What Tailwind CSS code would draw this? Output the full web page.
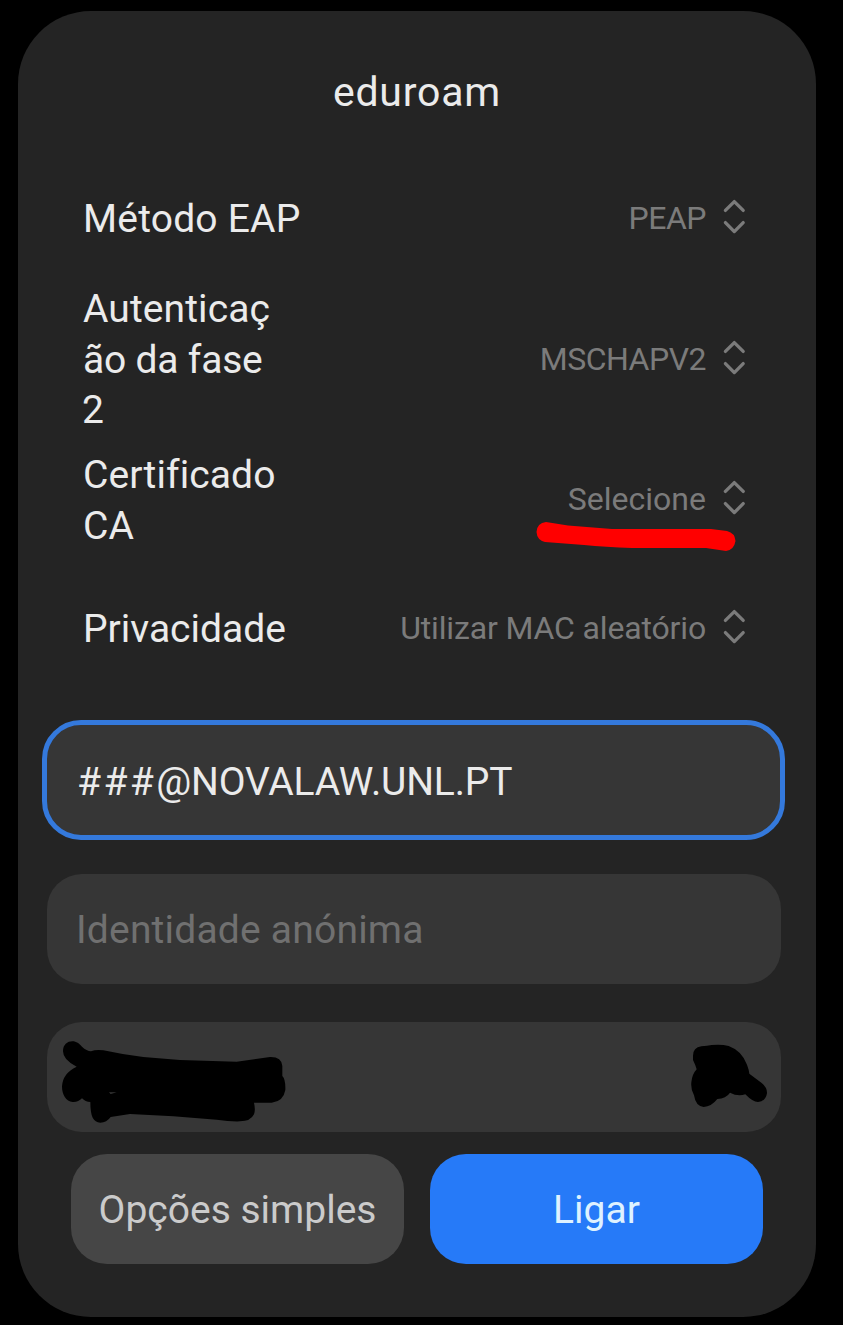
<!DOCTYPE html>
<html lang="pt">
<head>
<meta charset="utf-8">
<title>eduroam</title>
<script src="https://cdn.jsdelivr.net/npm/@tailwindcss/browser@4"></script>
</head>
<body class="w-[843px] h-[1325px] overflow-hidden bg-black pl-[18px] pt-[11px] font-['Roboto','Liberation_Sans',sans-serif]">
<svg class="hidden">
  <symbol id="updown" viewBox="0 0 24 36">
    <path d="M3.4 11.4L12.3 2.6L21.2 11.4M3.4 23.6L12.3 32.6L21.2 23.6" fill="none" stroke="currentColor" stroke-width="3.3" stroke-linecap="round" stroke-linejoin="round"/>
  </symbol>
</svg>
<main class="relative flex flex-col w-[798px] h-[1306px] rounded-[73px] bg-[#242424] text-[#ebebeb] text-[39px] leading-[50.4px]">
  <h1 class="h-[142px] pt-[56px] text-center text-[41px] tracking-[0.8px]">eduroam</h1>

  <section class="flex flex-col pl-[65px] pr-[70px]">
    <div class="flex items-center justify-between h-[131px]">
      <div class="tracking-[0.2px] whitespace-nowrap pt-[2px]">Método EAP</div>
      <div class="flex items-center gap-[16px] text-[32px] text-[#7b7b7b]"><span class="tracking-[-0.5px]">PEAP</span><svg class="w-6 h-9 -mt-[3px]"><use href="#updown"/></svg></div>
    </div>
    <div class="flex items-center justify-between h-[151px]">
      <div class="tracking-[-0.1px] pt-px"><span class="tracking-[0.1px]">Autenticaç</span><br><span class="tracking-[-0.2px]">ão da fase</span><br><span class="inline-block -ml-px">2</span></div>
      <div class="flex items-center gap-[16px] text-[32px] text-[#7b7b7b]"><span class="tracking-[-0.5px]">MSCHAPV2</span><svg class="w-6 h-9 -mt-[3px]"><use href="#updown"/></svg></div>
    </div>
    <div class="flex items-center justify-between h-[130px]">
      <div class="tracking-[0.1px] pt-px">Certificado<br>CA</div>
      <div class="relative -mt-[2px] flex items-center gap-[16px] text-[32px] text-[#7b7b7b]"><span>Selecione</span><svg class="w-6 h-9 -mt-[3px]"><use href="#updown"/></svg>
        <svg class="absolute right-[8px] top-[44px] w-[204px] h-[36px]" viewBox="534 518 204 36"><path d="M536.500 532Q537 523 546 522L568 525.500L612 529H711L727 531Q735 533 735.500 541Q734 550 726 551L706 548H632Q605 547 584 545L545 542Q537 540 536.500 532Z" fill="#ff0000"/></svg>
      </div>
    </div>
    <div class="flex items-center justify-between h-[126px]">
      <div class="tracking-[0px] pt-[2px]">Privacidade</div>
      <div class="flex items-center gap-[16px] text-[32px] text-[#7b7b7b]"><span class="tracking-[-0.15px]">Utilizar MAC aleatório</span><svg class="w-6 h-9 -mt-[3px]"><use href="#updown"/></svg></div>
    </div>
  </section>

  <section class="flex flex-col pl-[29px] pr-[35px] mt-[34px]">
    <div class="-ml-[5px] -mr-[4px] -mt-[5px] h-[120px] flex items-center rounded-[39px] border-[5px] border-[#3479dc] bg-[#363636] pl-[30px] pt-[5px] tracking-[-0.15px]"><span><span class="tracking-[2.4px]">###</span>@NOVALAW.UNL.PT</span></div>
    <div class="mt-[34px] h-[110px] flex items-center rounded-[35px] bg-[#363636] pl-[29px] pt-[3px] text-[#707070] tracking-[0.2px]">Identidade anónima</div>
    <div class="relative mt-[38px] h-[110px] rounded-[35px] bg-[#363636]">
      <svg class="absolute -left-[7px] -top-[12px] w-[270px] h-[130px]" viewBox="0 0 810 390"><path fill-rule="evenodd" d="M69 124C69 104 82 94 97 94C110 94 117 101 126 110Q140 123 153 124Q168 118 190 121L248 132L310 141L420 150L590 155L690 141Q725 140 727 168V198Q737 207 736 240Q730 275 695 278H642Q647 300 642 313Q632 334 600 334Q570 335 530 329L400 319L270 312L212 321Q200 338 181 338C160 337 151 320 151 276Q136 276 126 265Q115 277 98 276C78 274 66 255 66 229Q68 190 110 170Q69 150 69 124ZM207 247L212 252L230 247Z" fill="#000"/></svg>
      <svg class="absolute right-[-49px] -top-[12px] w-[160px] h-[130px]" viewBox="0 0 480 390"><path d="M69 140Q68 112 94 109Q112 107 125 105Q154 102 176 108Q215 122 231 164Q237 180 238 191L274 218Q292 232 291 250Q287 274 264 276Q248 276 226 253Q203 260 180 248Q168 266 142 267Q124 290 101 291Q77 289 72 256Q62 240 64 217Q66 193 80 178Q76 164 69 150Z" fill="#000"/></svg>
    </div>
  </section>

  <section class="flex gap-[26px] pl-[53px] pr-[53px] mt-[22px]">
    <button class="w-[333px] h-[110px] rounded-[36px] bg-[#464646] text-[#cbcbcb] pt-[3px]">Opções simples</button>
    <button class="w-[333px] h-[110px] rounded-[36px] bg-[#267af8] text-[#dff2ff] pt-[3px]">Ligar</button>
  </section>
</main>
</body>
</html>
